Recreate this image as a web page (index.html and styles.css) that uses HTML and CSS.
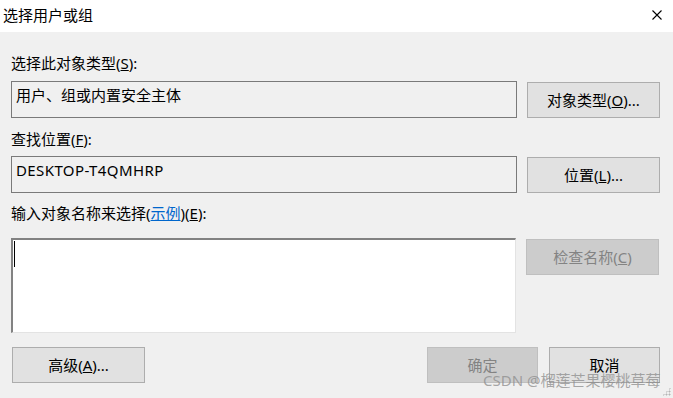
FILE: index.html
```html
<!DOCTYPE html>
<html lang="zh-CN">
<head>
    <meta charset="UTF-8">
    <meta name="viewport" content="width=device-width, initial-scale=1.0">
    <title>选择用户或组</title>
    <link rel="stylesheet" href="styles.css">
</head>
<body>
    <div class="dialog">
        <div class="titlebar">
            <span class="title">选择用户或组</span>
            <svg class="close" width="10" height="10" viewBox="0 0 10 10">
                <path d="M0.5 0.5 L9.5 9.5 M9.5 0.5 L0.5 9.5" stroke="#000" stroke-width="1.1"/>
            </svg>
        </div>

        <div class="content">
            <div class="label label-first">选择此对象类型(<u>S</u>):</div>
            <div class="row">
                <div class="field">用户、组或内置安全主体</div>
                <button class="btn">对象类型(<u>O</u>)...</button>
            </div>

            <div class="label label-second">查找位置(<u>F</u>):</div>
            <div class="row">
                <div class="field field-host">DESKTOP-T4QMHRP</div>
                <button class="btn">位置(<u>L</u>)...</button>
            </div>

            <div class="label label-third">输入对象名称来选择(<a class="link" href="#">示例</a>)(<u>E</u>):</div>
            <div class="row">
                <div class="names"><span class="caret"></span></div>
                <button class="btn" disabled>检查名称(<u>C</u>)</button>
            </div>

            <div class="footer">
                <button class="btn">高级(<u>A</u>)...</button>
                <div class="actions">
                    <button class="btn btn-ok" disabled>确定</button>
                    <button class="btn btn-ok">取消</button>
                </div>
            </div>
        </div>

        <div class="watermark">CSDN @榴莲芒果樱桃草莓</div>
        <div class="grip"></div>
    </div>
</body>
</html>
```

FILE: styles.css
```css
body {
    margin: 0;
    font-family: "Noto Sans", "Noto Sans CJK SC", sans-serif;
    font-size: 15px;
    color: #000;
}

.dialog {
    position: relative;
    width: 673px;
    height: 398px;
    background: #f0f0f0;
    overflow: hidden;
}

.titlebar {
    height: 32px;
    background: #fff;
    display: flex;
    align-items: center;
    justify-content: space-between;
    padding: 0 11px 0 3px;
}

.title {
    line-height: 20px;
    margin-top: -3px;
}

.close {
    margin-top: -3px;
}

.content {
    padding: 21px 13px 0 11px;
}

.label {
    line-height: 20px;
    height: 20px;
}

.label-first {
    margin-bottom: 8px;
}

.label-second {
    margin-top: 11px;
    margin-bottom: 7px;
}

.label-third {
    margin-top: 10px;
    margin-bottom: 15px;
}

.link {
    color: #0066cc;
}

.row {
    display: flex;
    align-items: flex-start;
    gap: 10px;
}

.field {
    box-sizing: border-box;
    width: 506px;
    height: 37px;
    border: 1px solid #7a7a7a;
    padding: 3px 4px 0 4px;
    line-height: 20px;
}

.field-host {
    letter-spacing: 0.4px;
}

.names {
    box-sizing: border-box;
    width: 505px;
    height: 95px;
    background: #fff;
    border-top: 2px solid #828282;
    border-left: 2px solid #828282;
    border-right: 1px solid #e3e3e3;
    border-bottom: 1px solid #e3e3e3;
    padding: 1px 0 0 1px;
}

.caret {
    display: block;
    width: 1px;
    height: 26px;
    background: #000;
}

.btn {
    box-sizing: border-box;
    width: 133px;
    height: 36px;
    margin-top: 1px;
    background: #e1e1e1;
    border: 1px solid #adadad;
    font-family: inherit;
    font-size: 15px;
    color: #000;
    padding: 0;
    line-height: 20px;
}

.btn:disabled {
    background: #cccccc;
    border-color: #bfbfbf;
    color: #838383;
}

.footer {
    display: flex;
    justify-content: space-between;
    margin-top: 14px;
    padding-left: 1px;
}

.footer .btn {
    margin-top: 0;
}

.actions {
    display: flex;
    gap: 11px;
}

.btn-ok {
    width: 111px;
}

.watermark {
    position: absolute;
    left: 483px;
    top: 370px;
    line-height: 20px;
    color: rgba(140, 140, 140, 0.75);
}

.grip {
    position: absolute;
    right: 2px;
    bottom: 2px;
    width: 9px;
    height: 9px;
    background:
        radial-gradient(circle, #b4b4b4 0.9px, transparent 1.1px) 0 0 / 3px 3px;
    clip-path: polygon(100% 0, 100% 100%, 0 100%);
}
```
